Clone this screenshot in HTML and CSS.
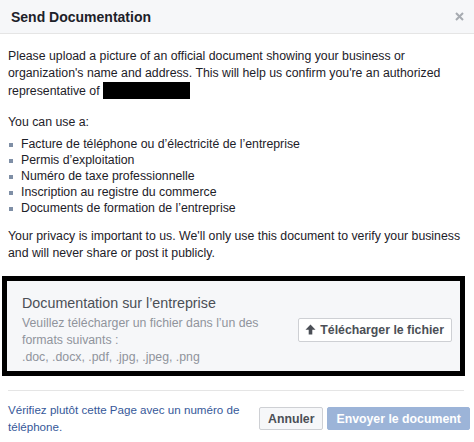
FILE: index.html
```html
<!DOCTYPE html>
<html lang="en">
<head>
  <meta charset="UTF-8" />
  <title>Send Documentation</title>
  <link rel="stylesheet" href="styles.css">
</head>
<body>
  <div class="dialog">
    <div class="dialog-header">
      <h3>Send Documentation</h3>
      <span class="close">
        <svg width="9" height="9" viewBox="0 0 9 9"><path d="M1 1L8 8M8 1L1 8" stroke="#a7abb1" stroke-width="2"/></svg>
      </span>
    </div>

    <div class="dialog-body">
      <p>Please upload a picture of an official document showing your business or organization's name and address. This will help us confirm you're an authorized representative of <span class="redacted"></span></p>

      <p class="tight">You can use a:</p>
      <ul class="doc-list">
        <li>Facture de téléphone ou d’électricité de l’entreprise</li>
        <li>Permis d’exploitation</li>
        <li>Numéro de taxe professionnelle</li>
        <li>Inscription au registre du commerce</li>
        <li>Documents de formation de l’entreprise</li>
      </ul>

      <p>Your privacy is important to us. We'll only use this document to verify your business and will never share or post it publicly.</p>

      <div class="upload-box">
        <div class="upload-inner">
          <div class="upload-text">
            <div class="upload-title">Documentation sur l’entreprise</div>
            <div class="upload-desc">Veuillez télécharger un fichier dans l’un des formats suivants :</div>
            <div class="upload-desc">.doc, .docx, .pdf, .jpg, .jpeg, .png</div>
          </div>
          <button class="btn btn-upload">
            <svg width="11" height="11" viewBox="0 0 11 11"><path d="M5.5 0.5L10.5 5.8H7.3V10.5H3.7V5.8H0.5Z" fill="#4b4f56"/></svg>
            Télécharger le fichier
          </button>
        </div>
      </div>
    </div>

    <div class="dialog-footer">
      <a class="alt-link" href="#">Vérifiez plutôt cette Page avec un numéro de téléphone.</a>
      <button class="btn btn-cancel">Annuler</button>
      <button class="btn btn-primary" disabled>Envoyer le document</button>
    </div>
  </div>
</body>
</html>
```

FILE: styles.css
```css
body {
  margin: 0;
  background: #fff;
  font-family: 'Liberation Sans', Arial, sans-serif;
  font-size: 12.3px;
  color: #1d2129;
}
.dialog {
  width: 474px;
}
.dialog-header {
  height: 33px;
  background: #f6f7f9;
  border-bottom: 1px solid #e5e5e5;
  display: flex;
  align-items: center;
  justify-content: space-between;
  padding: 0 11px;
}
.dialog-header h3 {
  margin: 0;
  font-size: 14px;
  font-weight: bold;
  color: #1d2129;
}
.close {
  display: flex;
  margin-right: -1px;
}
.dialog-body {
  padding: 14px 8px 0;
}
.dialog-body p {
  margin: 0 0 14px;
  line-height: 17px;
}
.dialog-body p.tight {
  margin-bottom: 5px;
}
.redacted {
  display: inline-block;
  width: 87px;
  height: 17px;
  background: #000;
  vertical-align: -4px;
}
.doc-list {
  list-style: none;
  margin: 0 0 12px;
  padding: 0;
}
.doc-list li {
  line-height: 16px;
  padding-left: 13px;
  position: relative;
}
.doc-list li::before {
  content: "";
  position: absolute;
  left: 1px;
  top: 7px;
  width: 4px;
  height: 4px;
  background: #7f8fa6;
}
.upload-box {
  margin: 0 1px 0 -6px;
  border: 5px solid #000;
}
.upload-inner {
  background: #f6f7f9;
  display: flex;
  align-items: center;
  padding: 12px 8px 5px 15px;
}
.upload-text {
  flex: 1;
}
.upload-title {
  font-size: 14.3px;
  color: #4b4f56;
  line-height: 20px;
  margin-bottom: 2px;
}
.upload-desc {
  width: 250px;
  color: #90949c;
  line-height: 17px;
}
.btn {
  font-family: inherit;
  font-size: 12.3px;
  font-weight: bold;
  color: #4b4f56;
  background: #f6f7f9;
  border: 1px solid #ced0d4;
  border-radius: 2px;
  height: 24px;
  padding: 0 8px;
  white-space: nowrap;
}
.btn-upload {
  background: #fff;
  display: flex;
  align-items: center;
  gap: 4px;
  padding: 0 7px 0 6px;
}
.dialog-footer {
  margin: 14px 10px 0 8px;
  border-top: 1px solid #e5e5e5;
  padding-top: 10px;
  display: flex;
  align-items: flex-start;
}
.alt-link {
  flex: 0 0 251px;
  font-size: 11.6px;
  color: #365899;
  text-decoration: none;
  line-height: 17px;
}
.dialog-footer .btn {
  margin-top: 6px;
  height: 23px;
}
.btn-cancel {
  margin-right: 4px;
}
.btn-primary {
  background: #9cb4d8;
  border-color: #9cb4d8;
  color: #fff;
  flex: 1;
}
```
